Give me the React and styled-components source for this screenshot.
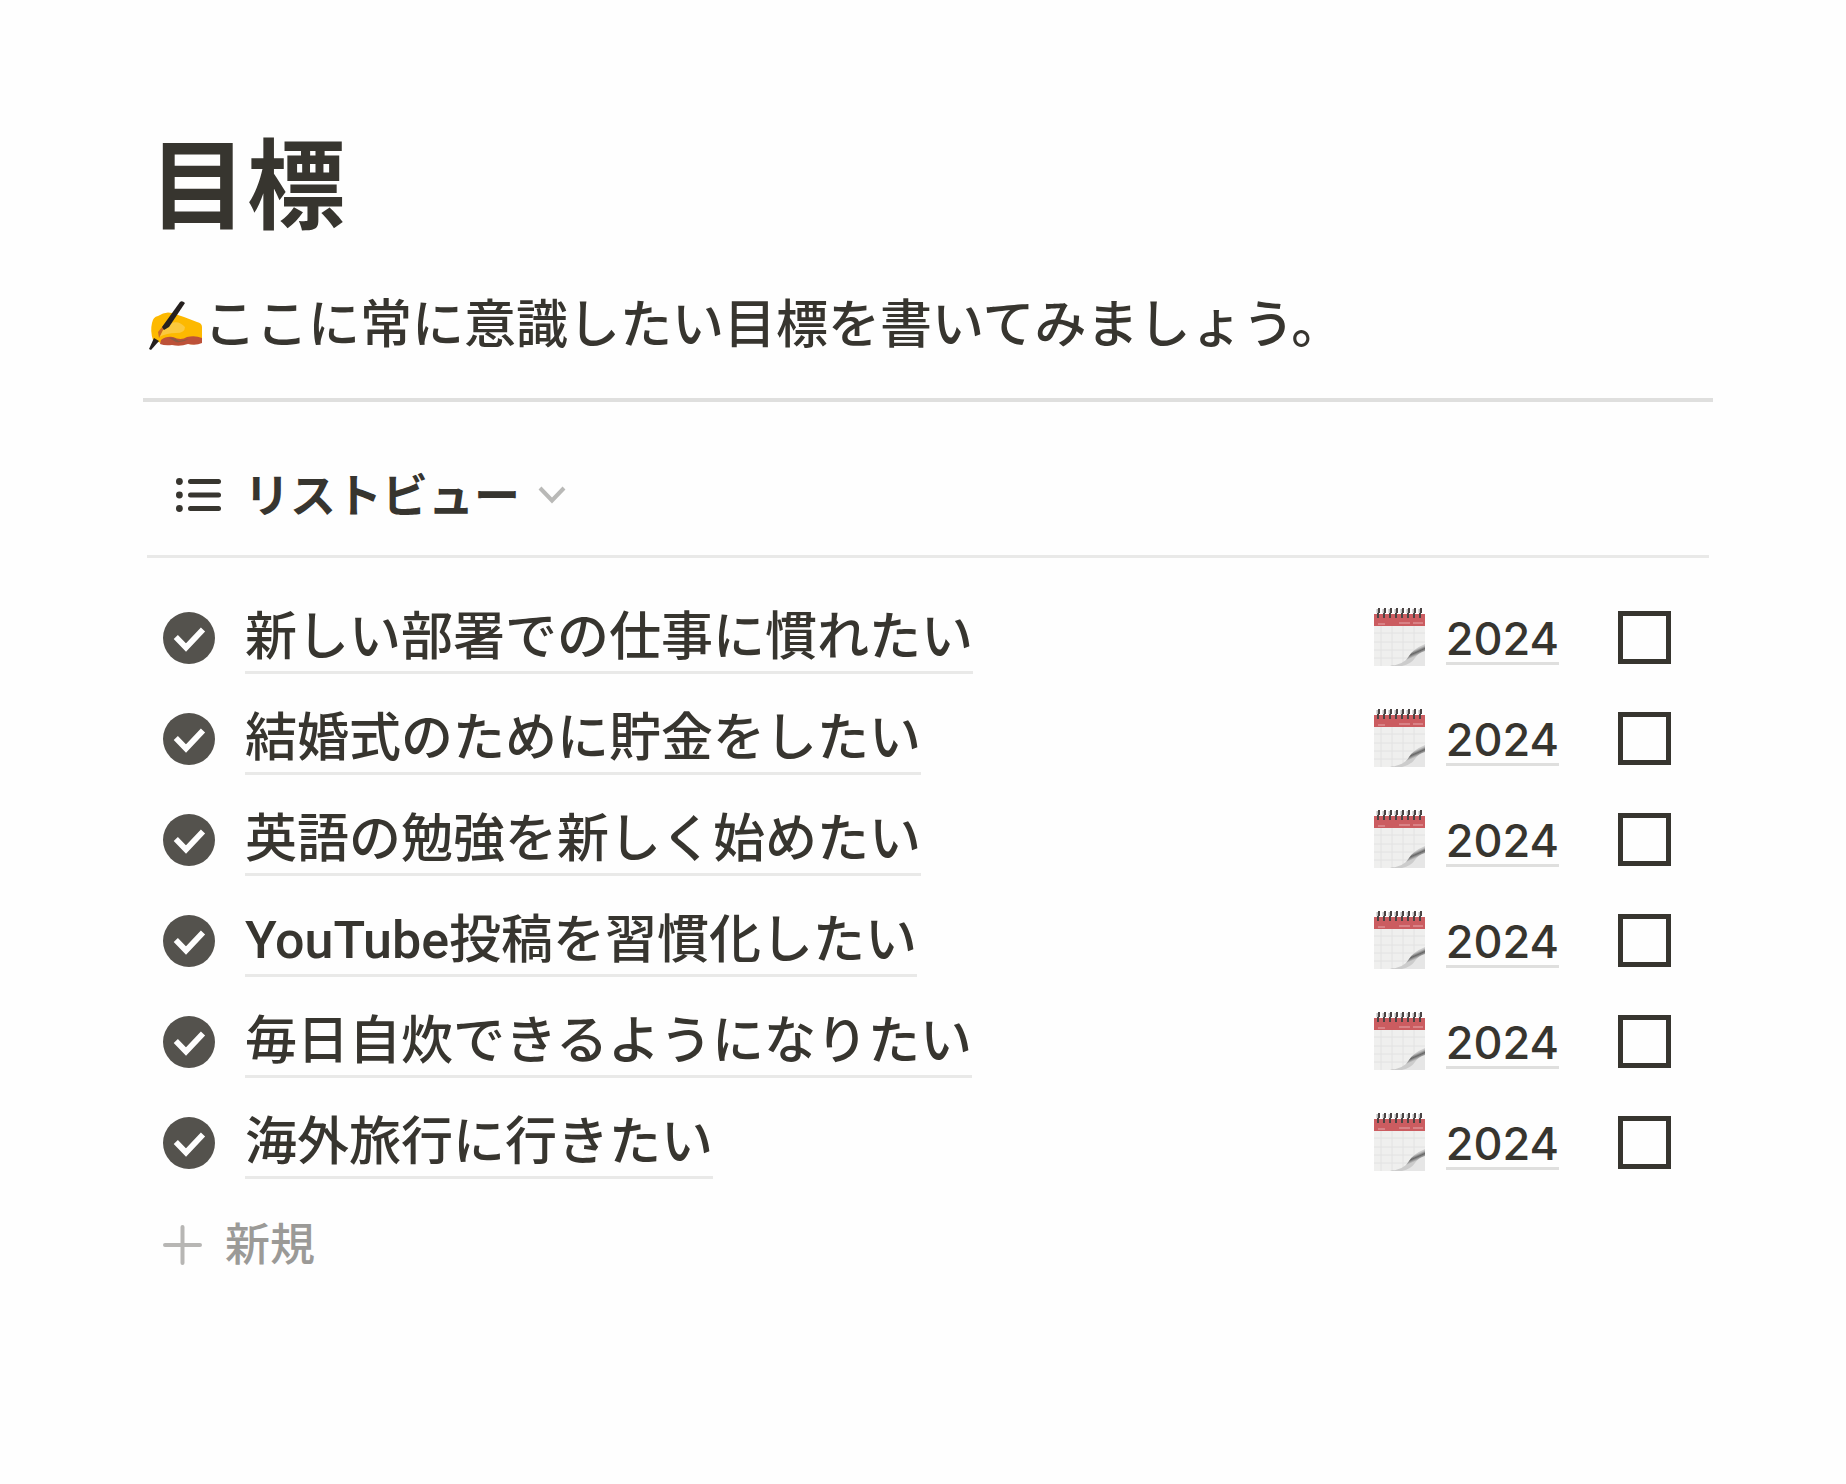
import React, { useState } from "react";
import styled, { createGlobalStyle } from "styled-components";

const GlobalStyle = createGlobalStyle`
  *{
    box-sizing:border-box;
  }
  body{
    margin:0;
    background-color:#fefefe;
    color:#37352f;
    font-family:Inter, "Noto Sans CJK JP", sans-serif;
  }
`;

const Page = styled.main`
  padding:114px 133px 0 143px;

  h1{
    margin:0;
    padding:0 6px;
    font-size:98px;
    line-height:144px;
    font-weight:700;
  }
`;

const Intro = styled.p`
  display:flex;
  align-items:center;
  margin:0;
  padding:28px 4px 34px;
  font-size:52px;
  font-weight:500;
  line-height:78px;

  svg{
    flex:none;
    width:57px;
    height:52px;
  }
`;

const Divider = styled.hr`
  height:4px;
  margin:0;
  border:0;
  background-color:#dfdfde;
`;

const Database = styled.section`
  padding:0 4px;
`;

const ViewBar = styled.div`
  height:156px;
  padding:63px 29px 0;
  border-bottom:3px solid #e9e9e8;
`;

const ViewButton = styled.button`
  display:flex;
  align-items:center;
  height:60px;
  padding:0;
  border:0;
  background:none;
  color:inherit;
  font:700 46px/60px Inter, "Noto Sans CJK JP", sans-serif;
  cursor:pointer;

  span{
    margin:0 18px 0 22px;
  }
`;

const GoalList = styled.ul`
  margin:0;
  padding:29px 38px 0 16px;
  list-style:none;
`;

const GoalRow = styled.li`
  display:flex;
  align-items:center;
  height:101px;
`;

const GoalLink = styled.a`
  margin:0 auto 0 30px;
  padding-top:4px;
  border-bottom:3px solid #e9e9e8;
  color:inherit;
  font-family:Roboto, "Noto Sans CJK JP", sans-serif;
  font-size:52px;
  font-weight:500;
  line-height:66px;
  text-decoration:none;
`;

const YearLink = styled.a`
  display:flex;
  align-items:center;
  margin-right:59px;
  color:inherit;
  font-size:45px;
  font-weight:500;
  line-height:46px;
  text-decoration:none;

  span{
    margin-left:20px;
    padding-top:6px;
    border-bottom:3px solid #dfdfde;
  }
`;

const Checkbox = styled.input`
  appearance:none;
  width:53px;
  height:53px;
  margin:0;
  border:5px solid #37352f;
  cursor:pointer;

  &:checked{
    background-color:#37352f;
  }
`;

const NewButton = styled.button`
  display:flex;
  align-items:center;
  gap:23px;
  height:104px;
  padding:0 16px;
  border:0;
  background:none;
  color:#9b9a97;
  font:500 45px/60px Inter, "Noto Sans CJK JP", sans-serif;
  cursor:pointer;
`;

const goals = [
  "新しい部署での仕事に慣れたい",
  "結婚式のために貯金をしたい",
  "英語の勉強を新しく始めたい",
  "YouTube投稿を習慣化したい",
  "毎日自炊できるようになりたい",
  "海外旅行に行きたい",
];

const WritingHand = () => (
  <svg viewBox="0 0 57 52" role="img" aria-label="書く手">
    <path d="M5 24Q6 18 11 17Q18 12 25 14L37 18L50 23Q55 24 55 28V42Q50 46 42 45L14 44L6 41Q3 32 5 24Z" fill="#fdb900" />
    <path d="M14 41Q19 37 26 38Q34 42 40 38Q48 36 55 39V44Q49 47 41 45Q33 48 25 46Q18 47 13 45Z" fill="#bd5138" />
    <path d="M22 39Q27 38 32 42L42 40Q35 44 29 43Z" fill="#8d5a43" />
    <path d="M17 29Q29 18 38 28Q38 34 29 34Q20 34 12 38" fill="#fbc93e" />
    <path d="M11 33L20 22L25 23L16 31L12 39Z" fill="#c96a25" />
    <path d="M33 3Q35 1 38 4L22 28L17 31L15 28Z" fill="#25201f" />
    <path d="M7 39L12 42L4 51L2 50Z" fill="#25201f" />
  </svg>
);

const ListIcon = () => (
  <svg width="46" height="34" viewBox="0 0 46 34" aria-hidden="true">
    {[3.5, 17, 30.5].map((y) => (
      <g key={y} fill="#37352f">
        <circle cx="3.4" cy={y} r="3.4" />
        <rect x="12" y={y - 2.5} width="33" height="5" rx="2.5" />
      </g>
    ))}
  </svg>
);

const Chevron = () => (
  <svg width="28" height="18" viewBox="0 0 28 18" aria-hidden="true">
    <path d="M2 2L14 14.500L26 2" fill="none" stroke="#b9b9b7" strokeWidth="4" />
  </svg>
);

const CheckCircle = () => (
  <svg width="52" height="52" viewBox="0 0 52 52" aria-hidden="true">
    <circle cx="26" cy="26" r="26" fill="#54524d" />
    <path d="M12.800 25L23 35.500L40 17.500" fill="none" stroke="#fefefe" strokeWidth="5.800" />
  </svg>
);

const CalendarIcon = () => (
  <svg width="52" height="60" viewBox="0 0 52 60" aria-hidden="true">
    <defs>
      <linearGradient id="curl" x1="0.350" y1="0.300" x2="0.700" y2="0.800">
        <stop offset="0" stopColor="#f4f4f4" />
        <stop offset="0.300" stopColor="#c4c4c4" />
        <stop offset="0.480" stopColor="#666" />
        <stop offset="0.700" stopColor="#ccc" />
      </linearGradient>
    </defs>
    <path d="M0 17H51V58H0Z" fill="#efefee" />
    <path d="M7 17V58M18 17V58M29 17V55M40 17V43M0 25H51M0 34H51M0 42H40M0 50H34" stroke="#e2e2e2" fill="none" />
    <path d="M51 36V58H16Q31 56 35 48Q39 41 51 36Z" fill="url(#curl)" />
    <path d="M51 43V58H28Q37 56 41 50Q44 45 51 43Z" fill="#e6e6e6" />
    <rect y="6" width="51" height="12" fill="#cb5c60" />
    <path d="M4 16H11M25 15H36M39 15H49" stroke="#d98286" strokeWidth="2" />
    {[4, 10, 16, 22, 28, 34, 40, 46].map((x) => (
      <g key={x} fill="none">
        <path d={`M${x} 1V5`} stroke="#bbb" strokeWidth="3" />
        <path d={`M${x + 1} 0V5M${x} 5V10`} stroke="#4a4444" strokeWidth="2" />
      </g>
    ))}
  </svg>
);

const App = () => {
  const [done, setDone] = useState({});

  function toggle(goal) {
    setDone({ ...done, [goal]: !done[goal] });
  }

  return (
    <>
      <GlobalStyle />
      <Page>
        <h1>目標</h1>
        <Intro>
          <WritingHand />
          ここに常に意識したい目標を書いてみましょう。
        </Intro>
        <Divider />
        <Database>
          <ViewBar>
            <ViewButton type="button">
              <ListIcon />
              <span>リストビュー</span>
              <Chevron />
            </ViewButton>
          </ViewBar>
          <GoalList>
            {goals.map((goal) => (
              <GoalRow key={goal}>
                <CheckCircle />
                <GoalLink href="#goal">{goal}</GoalLink>
                <YearLink href="#2024">
                  <CalendarIcon />
                  <span>2024</span>
                </YearLink>
                <Checkbox
                  type="checkbox"
                  aria-label={goal}
                  checked={!!done[goal]}
                  onChange={() => toggle(goal)}
                />
              </GoalRow>
            ))}
          </GoalList>
          <NewButton type="button">
            <svg width="39" height="40" viewBox="0 0 39 40" aria-hidden="true">
              <path d="M2 20H37M19.500 2V38" stroke="#b7b6b4" strokeWidth="4" strokeLinecap="round" />
            </svg>
            新規
          </NewButton>
        </Database>
      </Page>
    </>
  );
};

export default App;
